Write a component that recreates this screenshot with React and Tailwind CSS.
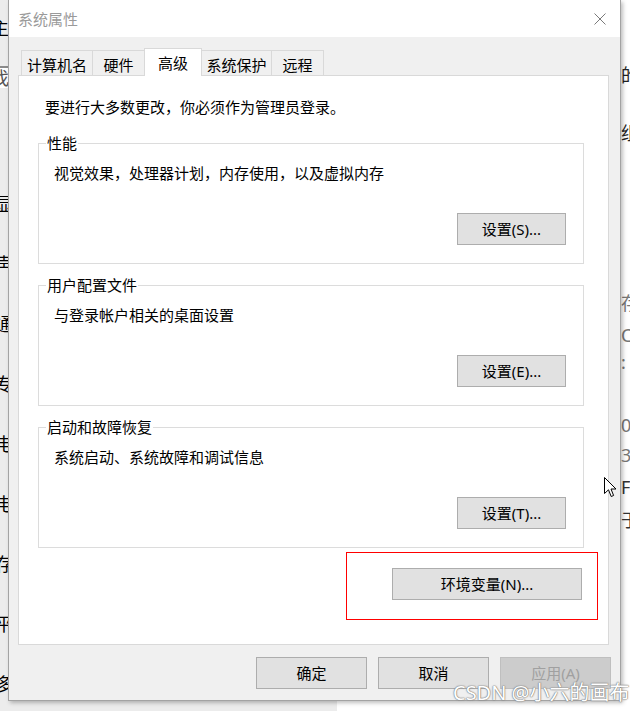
import React from "react";

const FONT = "font-['Noto_Sans','Noto_Sans_CJK_SC',sans-serif]";

const navItems = ["显示", "声音", "通知和操作", "专注助手", "电源和睡眠", "电池", "存储", "平板电脑", "多任务处理"];

const rightBits = [
  { t: "的", top: 65, c: "text-[#222]" },
  { t: "组", top: 123, c: "text-[#222]" },
  { t: "存", top: 293, c: "text-[#777]" },
  { t: "Co", top: 325, c: "text-[#777]" },
  { t: ":", top: 352, c: "text-[#777]" },
  { t: "00", top: 415, c: "text-[#777]" },
  { t: "32", top: 445, c: "text-[#777]" },
  { t: "Fi", top: 477, c: "text-[#333]" },
  { t: "于", top: 510, c: "text-[#333]" },
];

function Btn({ children, className = "", disabled = false }) {
  return (
    <button
      className={
        "h-[32px] border text-[15px] leading-[20px] " +
        (disabled
          ? "bg-[#cccccc] border-[#bfbfbf] text-[#a0a0a0] "
          : "bg-[#e1e1e1] border-[#adadad] text-black ") +
        className
      }
    >
      {children}
    </button>
  );
}

function Group({ title, text, button }) {
  return (
    <fieldset className="border border-[#dcdcdc]">
      <legend className="ml-[7px] px-[1px] text-[15px] leading-[20px] text-black">{title}</legend>
      <div className="flex flex-col pl-[15px] pr-[17px] pt-[10px] pb-[18px]">
        <p className="text-[15px] leading-[20px] text-black">{text}</p>
        <Btn className="mt-[30px] w-[109px] self-end">{button}</Btn>
      </div>
    </fieldset>
  );
}

function Tab({ label, width, active, first }) {
  if (active) {
    return (
      <div
        className="relative z-10 -ml-px flex h-[28px] items-center justify-center border-x border-t border-[#d9d9d9] bg-white text-[15px] leading-[20px] text-black"
        style={{ width }}
      >
        {label}
      </div>
    );
  }
  return (
    <div
      className={
        "flex h-[26px] items-center justify-center border border-[#d9d9d9] bg-[#f0f0f0] pt-[3px] text-[15px] leading-[20px] text-black " +
        (first ? "ml-0" : "-ml-px")
      }
      style={{ width }}
    >
      {label}
    </div>
  );
}

export default function App() {
  return (
    <div className={"relative h-[711px] w-[630px] overflow-hidden bg-white " + FONT}>
      {/* settings window behind the dialog */}
      <div className="absolute left-0 top-0 flex h-full w-[337px] flex-col bg-[#ececec] text-[18px] leading-[20px] text-black">
        <div className="ml-[-9px] mt-[18px]">主页</div>
        <div className="mt-[28px] flex h-[34px] items-center border-t-2 border-[#8a8a8a] bg-white">
          <span className="ml-[-9px] text-[#555]">找设置</span>
        </div>
        <div className="mt-[86px] flex flex-col">
          {navItems.map((n) => (
            <div key={n} className="ml-[-5px] flex h-[60px] items-center">
              {n}
            </div>
          ))}
        </div>
      </div>
      {rightBits.map((b) => (
        <div
          key={b.t + b.top}
          className={"absolute left-[621px] text-[18px] leading-[20px] " + b.c}
          style={{ top: b.top }}
        >
          {b.t}
        </div>
      ))}

      {/* dialog */}
      <div className="absolute left-[8px] top-0 flex h-[701px] w-[613px] flex-col border-x border-b border-[#a3a3a3] bg-[#f0f0f0] shadow-[2px_2px_4px_rgba(0,0,0,0.25)]">
        <div className="flex h-[37px] items-center justify-between bg-white pl-[9px] pr-[14px]">
          <span className="text-[15px] leading-[20px] text-[#9a9a9a]">系统属性</span>
          <svg width="12" height="12" viewBox="0 0 12 12">
            <path d="M0.5 0.5 L11.5 11.5 M11.5 0.5 L0.5 11.5" stroke="#7a7a7a" strokeWidth="1" />
          </svg>
        </div>

        <div className="flex flex-1 flex-col pl-[9px] pr-[11px] pt-[11px]">
          <div className="relative z-10 -mb-px flex h-[28px] items-end pl-[3px]">
            <Tab label="计算机名" width={72} first />
            <Tab label="硬件" width={53} />
            <Tab label="高级" width={58} active />
            <Tab label="系统保护" width={71} />
            <Tab label="远程" width={53} />
          </div>

          <div className="flex h-[570px] flex-col border border-[#d9d9d9] bg-white pl-[19px] pr-[24px] pt-[21px]">
            <p className="ml-[7px] text-[15px] leading-[20px] text-black">要进行大多数更改，你必须作为管理员登录。</p>
            <div className="mt-[16px] flex flex-col gap-[11px]">
              <Group title="性能" text="视觉效果，处理器计划，内存使用，以及虚拟内存" button="设置(S)..." />
              <Group title="用户配置文件" text="与登录帐户相关的桌面设置" button="设置(E)..." />
              <Group title="启动和故障恢复" text="系统启动、系统故障和调试信息" button="设置(T)..." />
            </div>
            <div className="mt-[20px] flex justify-end pr-[2px]">
              <Btn className="w-[190px]">环境变量(N)...</Btn>
            </div>
          </div>

          <div className="-mr-[2px] mt-[12px] flex justify-end gap-[11px]">
            <Btn className="w-[111px]">确定</Btn>
            <Btn className="w-[111px]">取消</Btn>
            <Btn className="w-[111px]" disabled>
              应用(A)
            </Btn>
          </div>
        </div>
      </div>

      {/* red annotation box */}
      <div className="pointer-events-none absolute left-[346px] top-[552px] h-[68px] w-[252px] border border-[#ff0000]" />

      {/* mouse cursor */}
      <svg className="absolute left-[604px] top-[477px]" width="13" height="21" viewBox="0 0 13 21">
        <path d="M0.5 0.5 L0.5 16.5 L4.5 12.8 L7.2 19.5 L9.6 18.5 L7 12 L12 12 Z" fill="white" stroke="black" strokeWidth="1" />
      </svg>

      {/* watermark */}
      <div className="absolute left-[453px] top-[681px] text-[20px] leading-[24px] text-white [text-shadow:0_0_1px_#777,0_0_1px_#777,0_0_2px_#999]">
        CSDN @小六的画布
      </div>
    </div>
  );
}
